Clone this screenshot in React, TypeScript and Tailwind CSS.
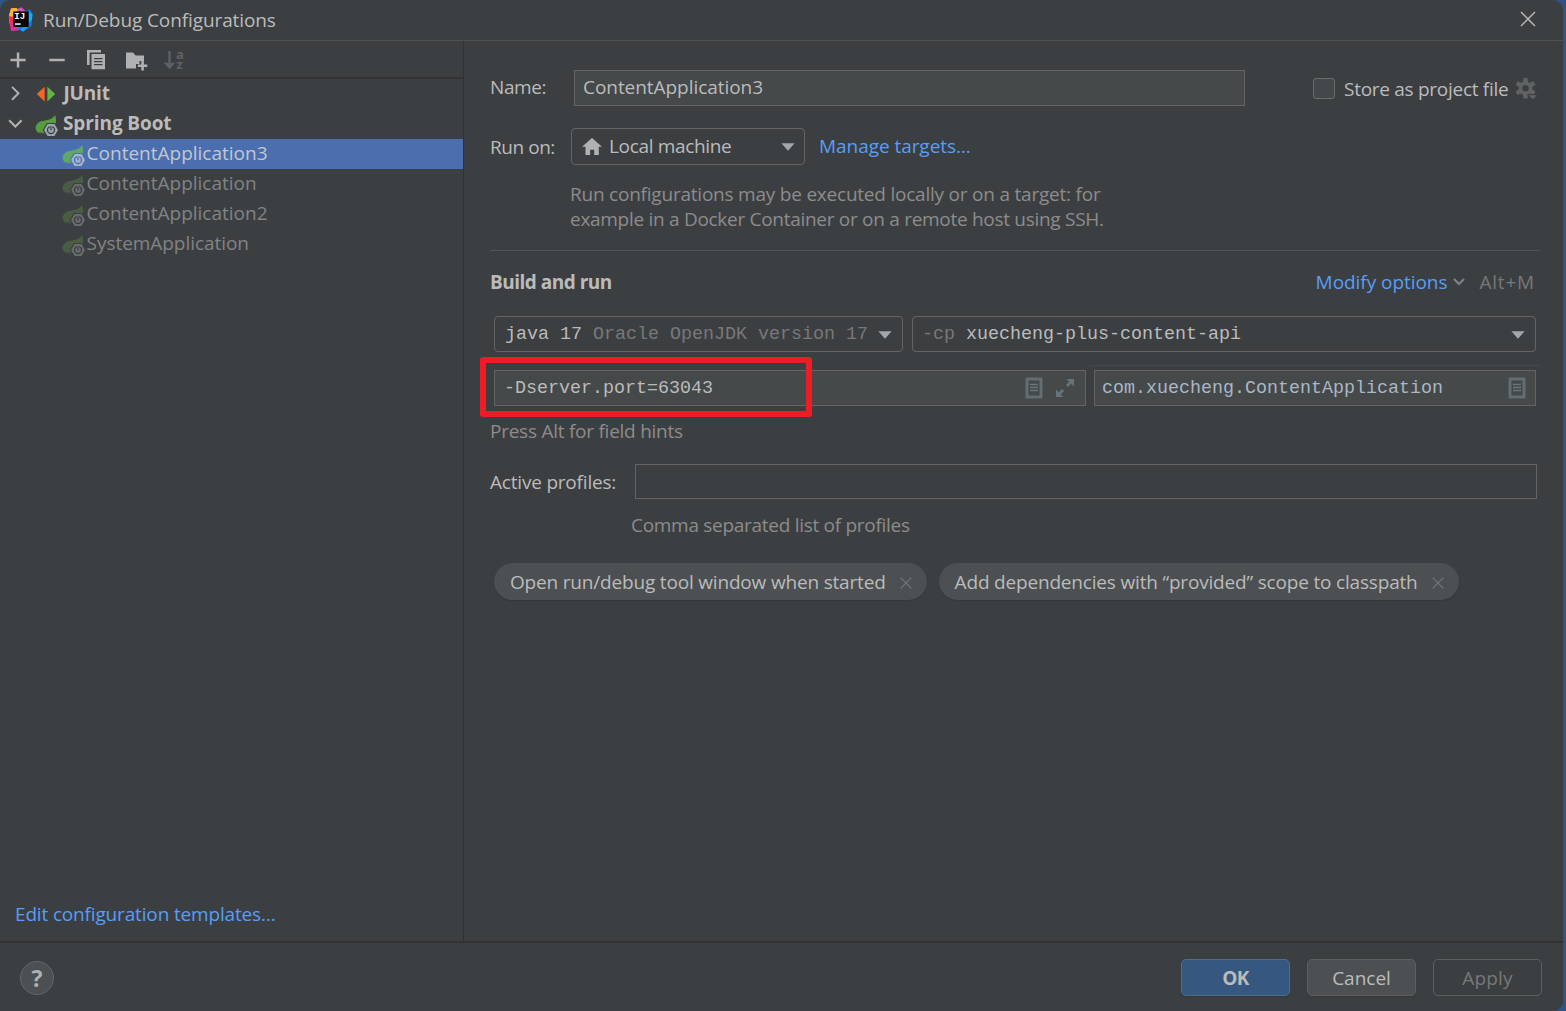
import type { ReactNode } from "react";

function SpringIcon({ tone }: { tone: "normal" | "selected" | "dim" }) {
  const c = {
    normal: { leaf: "#579c41", hex: "#9aa7b0", bg: "#3c3f41" },
    selected: { leaf: "#5fa865", hex: "#a3b4cf", bg: "#4b6eaf" },
    dim: { leaf: "#495c44", hex: "#686c6f", bg: "#3c3f41" },
  }[tone];
  return (
    <svg width="24" height="22" viewBox="0 0 24 22" className="shrink-0">
      <path d="M2.800 17.400C-.8 14.200.2 9.500 4.300 7 8.200 4.900 16 6.200 20.200 0c1.300 4.400 1.700 9.800-2.600 13.700-3.300 3-8.200 3.900-14.800 3.700z" fill={c.leaf} />
      <path d="M3.600 18.200l6.400-1.500v1.500z" fill={c.leaf} />
      <path d="M11.800 8h8.400l4.100 7-4.100 7h-8.400l-4.100-7z" fill={c.bg} />
      <path d="M12.600 9h6.800l3.600 6-3.600 6h-6.800L9 15z" fill={c.hex} />
      <circle cx="16" cy="15" r="3.500" fill="none" stroke={c.bg} strokeWidth="1.300" />
      <path d="M14.700 10.600h2.600v4.900h-2.600z" fill={c.hex} />
      <path d="M16 11.600v3.700" stroke={c.bg} strokeWidth="1.300" />
    </svg>
  );
}

function IdeaLogo() {
  return (
    <svg width="26" height="26" viewBox="0 0 26 26" className="shrink-0">
      <path d="M3 1.500l9 .5-2 11-8.500 4L.8 9z" fill="#fc801d" />
      <path d="M3.200 1.200L8.500 1l3 4-9 5L.9 8.500z" fill="#fdb33a" />
      <path d="M1 8.500l5 3 4 11-7 1.200-1-7.500z" fill="#fe2857" />
      <path d="M2 17l6-4 6 9-4 1.500-6.500.5z" fill="#e32d9b" />
      <path d="M9 2.200L13.500.2l4.500 4.300-6 4z" fill="#c757bc" />
      <path d="M16 5l6-2.500 2.500 4.500-1 12-8.500 5.800-6-3.300 9-6z" fill="#087cfa" />
      <path d="M20 4.500l4.500 2.500-.7 6L20 16z" fill="#07b5f5" />
      <path d="M12 21.500l8-2-5 5.300z" fill="#18a5f5" />
      <rect x="5.300" y="4.400" width="15.400" height="15.600" fill="#0a0508" />
      <text x="6.300" y="12.200" fontFamily="Liberation Mono" fontSize="9" fontWeight="700" fill="#fff">IJ</text>
      <rect x="7" y="16.300" width="5.600" height="1.500" fill="#fff" />
    </svg>
  );
}

function Caret({ className }: { className?: string }) {
  return (
    <svg width="14" height="8" viewBox="0 0 14 8" className={className}>
      <path d="M.4.200h13.200L7 7.800z" fill="#a4a7a9" />
    </svg>
  );
}

function DocIcon() {
  return (
    <svg width="18" height="22" viewBox="0 0 18 22">
      <rect x="2" y="2" width="14" height="18" fill="none" stroke="#636d72" strokeWidth="3" />
      <path d="M5 7.500h8M5 10.500h8M5 13.500h8" stroke="#6a7479" strokeWidth="1.300" />
    </svg>
  );
}

function CloseX() {
  return (
    <svg width="12" height="12" viewBox="0 0 12 12">
      <path d="M.6.600l10.800 10.800M11.400.600L.6 11.400" stroke="#717679" strokeWidth="1.300" />
    </svg>
  );
}

function TreeLeaf({ children, selected }: { children: ReactNode; selected?: boolean }) {
  return (
    <div className={selected ? "flex h-[30px] bg-[#4b6eaf] pl-[62px] text-[#c3c7ce]" : "flex h-[30px] pl-[62px] text-[#818384]"}>
      <div className="w-[24.600px] pt-[6px]">
        <SpringIcon tone={selected ? "selected" : "dim"} />
      </div>
      <div className="h-[28px] leading-[28px]">{children}</div>
    </div>
  );
}

function Toolbar() {
  return (
    <div className="h-[38px] border-b-2 border-[#323232] pl-2">
      <svg width="180" height="36" viewBox="8 41 180 36">
        <g fill="#afb1b3">
          <path d="M16.800 52.500h2.500v6.300h6.300v2.500h-6.300v6.300h-2.500v-6.300h-6.300v-2.500h6.300z" />
          <path d="M49.300 58.800h15.400v2.500H49.300z" />
          <path d="M87 50h14v2.500H89.600V65H87z" />
          <path d="M91.500 54H105v15.300H91.500zM94 58v1.300h8.500V58zm0 3v1.300h8.500V61zm0 3v1.300h8.500V64z" fillRule="evenodd" />
          <path d="M126 52.500h7l2.600 3H144V61h-4.500v3H136v4.500h-10z" />
          <path d="M141.300 61h2.600v3.500h3.400v2.600h-3.400v3.500h-2.600v-3.500h-3.500v-2.600h3.500z" />
        </g>
        <path d="M168.300 51h2.400v11.700h4.500l-5.700 6.500-5.700-6.500h4.500z" fill="#5e6163" />
        <text x="176" y="59" fontFamily="Open Sans" fontSize="13" fontWeight="700" fill="#5e6163">a</text>
        <text x="176.300" y="69.200" fontFamily="Open Sans" fontSize="13" fontWeight="700" fill="#5e6163">z</text>
      </svg>
    </div>
  );
}

function Sidebar() {
  return (
    <div className="flex w-[464px] shrink-0 flex-col border-r border-[#323232]">
      <Toolbar />
      <div className="flex flex-1 flex-col">
        <div className="flex h-[30px] font-bold">
          <svg width="63.500" height="30" viewBox="0 79 63.500 30">
            <path d="M12 86.900l6.500 6.400L12 99.700" fill="none" stroke="#afb1b3" strokeWidth="2" />
            <path d="M44.600 86.800v14.600L36.800 94z" fill="#f26522" />
            <path d="M47.400 86.800v14.600l7.800-7.400z" fill="#62b543" />
          </svg>
          <div className="leading-[28px] tracking-[-0.2px]">JUnit</div>
        </div>
        <div className="flex h-[30px] font-bold">
          <svg width="35" height="30" viewBox="0 109 35 30">
            <path d="M9.100 120.200l6.300 6.300 6.300-6.300" fill="none" stroke="#afb1b3" strokeWidth="2" />
          </svg>
          <div className="w-[28px] pt-[6px]">
            <SpringIcon tone="normal" />
          </div>
          <div className="leading-[28px] tracking-[-0.1px]">Spring Boot</div>
        </div>
        <TreeLeaf selected>ContentApplication3</TreeLeaf>
        <TreeLeaf>ContentApplication</TreeLeaf>
        <TreeLeaf>ContentApplication2</TreeLeaf>
        <TreeLeaf>
          <span className="tracking-[-0.05px]">SystemApplication</span>
        </TreeLeaf>
      </div>
      <div className="h-[41px] pl-[15px] leading-[28px] tracking-[-0.16px] text-[#589df6]">Edit configuration templates…</div>
    </div>
  );
}

function Chip({ children }: { children: ReactNode }) {
  return (
    <div className="flex h-[37px] items-center gap-[14px] rounded-full bg-[#4c5052] pr-[15px] pl-4 shadow-[0_1px_1px_#35383a]">
      <div className="mt-px tracking-[-0.18px]">{children}</div>
      <div className="mt-[2px]">
        <CloseX />
      </div>
    </div>
  );
}

function Main() {
  return (
    <div className="flex flex-1 flex-col pr-[23px] pl-[26px]">
      <div className="mt-[29px] flex h-[36px]">
        <div className="w-[84px] leading-[34px] tracking-[-0.4px]">Name:</div>
        <div className="w-[671px] border border-[#646464] bg-[#45494a] pl-2 leading-[32px] tracking-[-0.05px]">ContentApplication3</div>
        <div className="ml-[68px] mt-[8px] h-[21px] w-[22px] rounded-[3px] border border-[#6b6b6b] bg-[#43494a]" />
        <div className="ml-[9px] mt-px leading-[36px] tracking-[-0.28px]">Store as project file</div>
        <svg width="22" height="22" viewBox="0 0 22 22" className="mt-[8px] ml-[8px]">
          <g fill="#606365">
            <circle cx="9.500" cy="10.200" r="6.700" />
            <path d="M7.500 0h4l.6 4.500H6.900zM7.500 20.400h4l.6-4.500H6.900z" />
            <path d="M7.500 0h4l.6 4.500H6.900zM7.500 20.400h4l.6-4.500H6.900z" transform="rotate(60 9.500 10.200)" />
            <path d="M7.500 0h4l.6 4.500H6.900zM7.500 20.400h4l.6-4.500H6.900z" transform="rotate(120 9.500 10.200)" />
          </g>
          <circle cx="9.500" cy="10.200" r="3.200" fill="#3c3f41" />
          <path d="M10.800 16.200h11.200v5.800H14z" fill="#3c3f41" />
          <path d="M12.500 17.300h8.500l-4.200 4z" fill="#606365" />
        </svg>
      </div>

      <div className="mt-[22px] flex h-[37px]">
        <div className="w-[81px] leading-[38px] tracking-[-0.45px]">Run on:</div>
        <div className="flex w-[234px] items-center rounded-[4px] border-[1.500px] border-[#646464] pr-[9px] pl-2.5">
          <svg width="20" height="17" viewBox="0 0 20 17">
            <path d="M10 0l10 8.800h-3.200V17h-4.600v-5.300H8.100V17H3.500V8.800H0z" fill="#afb1b3" />
          </svg>
          <div className="ml-[7px] flex-1 tracking-[-0.34px]">Local machine</div>
          <Caret className="mt-px" />
        </div>
        <div className="ml-[14px] leading-[36px] tracking-[-0.05px] text-[#589df6]">Manage targets…</div>
      </div>

      <div className="mt-[17px] ml-[80px] h-[68px] leading-[25px] text-[#8c8c8c]">
        <div className="tracking-[-0.22px]">Run configurations may be executed locally or on a target: for</div>
        <div className="tracking-[-0.290px]">example in a Docker Container or on a remote host using SSH.</div>
      </div>
      <div className="h-px bg-[#515456]" />

      <div className="mt-[17px] flex h-[28px] items-center leading-[28px]">
        <div className="flex-1 font-bold tracking-[-0.5px]">Build and run</div>
        <div className="tracking-[-0.05px] text-[#589df6]">Modify options</div>
        <svg width="12" height="8" viewBox="0 0 12 8" className="ml-[6px]">
          <path d="M1 1l5 5 5-5" fill="none" stroke="#7e8284" strokeWidth="2.200" />
        </svg>
        <div className="mr-[5px] ml-[14px] tracking-[0.8px] text-[#787878]">Alt+M</div>
      </div>

      <div className="mt-[20px] ml-[4px] flex h-[36px] gap-[9px] font-[Liberation_Mono] text-[18.330px] whitespace-pre">
        <div className="flex w-[409px] items-center rounded-[4px] border-[1.500px] border-[#646464] pr-2.5 pl-[10px]">
          <div className="mt-px flex-1">
            java 17 <span className="text-[#787878]">Oracle OpenJDK version 17</span>
          </div>
          <Caret className="mt-px" />
        </div>
        <div className="flex w-[624px] items-center rounded-[4px] border-[1.500px] border-[#646464] pr-2.5 pl-[9px]">
          <div className="mt-px flex-1">
            <span className="text-[#787878]">-cp</span> xuecheng-plus-content-api
          </div>
          <Caret className="mt-px" />
        </div>
      </div>

      <div className="relative mt-[13px] ml-[4px] flex h-[41px] font-[Liberation_Mono] text-[18.330px]">
        <div className="mt-[5px] flex h-[36px] w-[592px] items-center border border-[#646464] bg-[#45494a] pl-[9px]">
          <div className="mt-[2px] flex-1">-Dserver.port=63043</div>
          <DocIcon />
          <svg width="18" height="18" viewBox="0 0 18 18" className="mr-[11px] ml-[13px]">
            <path d="M10.500 0H18v7.500l-2.700-2.700-3.400 3.300-2-2 3.300-3.400zM0 10.500l2.700 2.700 3.400-3.300 2 2-3.300 3.400L7.500 18H0z" fill="#66737a" />
          </svg>
        </div>
        <div className="ml-[4px] flex w-[450px] shrink-0 border-t border-[#45484a] pt-[4px] pl-[4px]">
          <div className="flex h-[36px] w-[442px] items-center border border-[#646464] bg-[#45494a] pr-[9px] pl-[7px] text-[#a9b7c6]">
            <div className="mt-[2px] flex-1">com.xuecheng.ContentApplication</div>
            <div className="-mt-px">
              <DocIcon />
            </div>
          </div>
        </div>
        <div className="absolute -top-[8px] -left-[14px] h-[60px] w-[332px] rounded-[3px] border-[6px] border-[#ee1c25]" />
      </div>
      <div className="mt-[11px] leading-[28px] tracking-[-0.25px] text-[#8c8c8c]">Press Alt for field hints</div>

      <div className="mt-[19px] flex h-[35px]">
        <div className="w-[145px] leading-[36px] tracking-[-0.2px]">Active profiles:</div>
        <div className="w-[902px] border-[1.500px] border-[#646464]" />
      </div>
      <div className="mt-[13px] ml-[141px] leading-[26px] tracking-[-0.29px] text-[#8c8c8c]">Comma separated list of profiles</div>

      <div className="mt-[25px] ml-[4px] flex gap-[12px]">
        <Chip>Open run/debug tool window when started</Chip>
        <Chip>Add dependencies with “provided” scope to classpath</Chip>
      </div>
    </div>
  );
}

function Footer() {
  return (
    <div className="flex h-[70px] border-t-2 border-[#323232] pt-[16px] pr-[21px] pl-[20px]">
      <div className="mt-[2px] flex size-[34px] items-center justify-center rounded-full border border-[#646768] bg-[#4c5052] text-[23px] font-bold text-[#afb1b3]">
        ?
      </div>
      <div className="ml-auto flex h-[37px] gap-[17px] text-center leading-[36px]">
        <div className="w-[109px] rounded-[5px] border-[1.500px] border-[#4c708c] bg-[#365880] font-bold tracking-[-0.5px] shadow-[0_1px_1px_#35383a]">OK</div>
        <div className="w-[109px] rounded-[5px] border-[1.500px] border-[#5e6060] bg-[#4c5052] shadow-[0_1px_1px_#35383a]">Cancel</div>
        <div className="w-[109px] rounded-[5px] border-[1.500px] border-[#5e6060] tracking-[0.2px] text-[#777879]">Apply</div>
      </div>
    </div>
  );
}

export default function App() {
  return (
    <div className="h-[1011px] w-[1566px] overflow-hidden bg-[#2f5382] font-[Open_Sans] text-[19px] text-[#bbbbbb]">
      <div className="flex h-full w-[1563px] flex-col overflow-hidden rounded-t-[10px] rounded-br-[10px] bg-[#3c3f41] whitespace-nowrap">
        <div className="flex h-[41px] shrink-0 items-center border-b border-[#515151] pl-[8px]">
          <IdeaLogo />
          <div className="ml-[9px] flex-1 tracking-[-0.1px]">Run/Debug Configurations</div>
          <svg width="16" height="16" viewBox="0 0 16 16" className="mr-[27px] -mt-[2px]">
            <path d="M1 1l14 14M15 1L1 15" stroke="#bbbbbb" strokeWidth="1.400" />
          </svg>
        </div>
        <div className="flex min-h-0 flex-1">
          <Sidebar />
          <Main />
        </div>
        <Footer />
      </div>
    </div>
  );
}
